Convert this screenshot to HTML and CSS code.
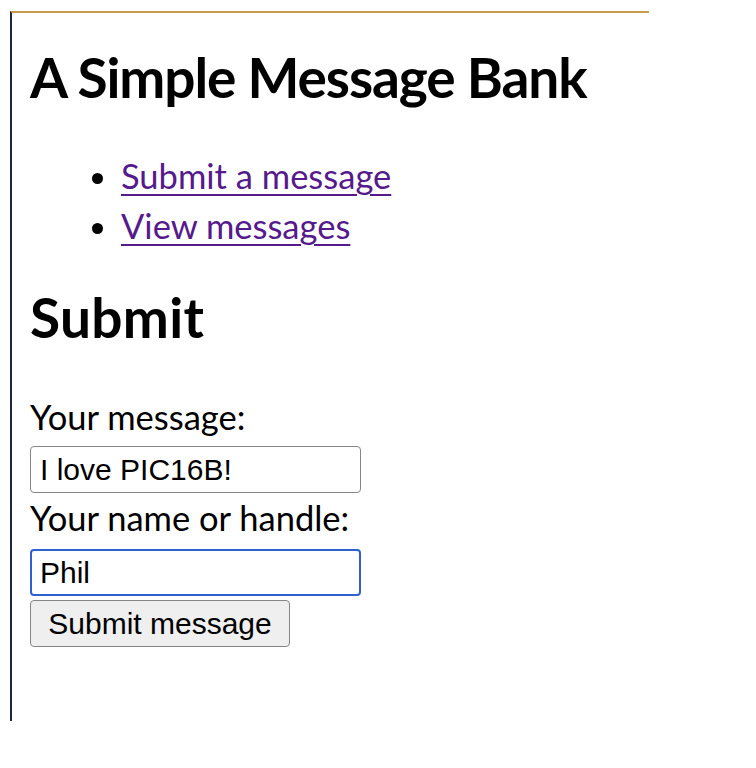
FILE: index.html
```html
<!DOCTYPE html>
<html lang="en">
<head>
<meta charset="utf-8">
<title>A Simple Message Bank</title>
<link rel="stylesheet" href="styles.css">
</head>
<body>
<div class="page">
  <h1 class="title">A Simple Message Bank</h1>
  <ul class="nav">
    <li><a href="#submit">Submit a message</a></li>
    <li><a href="#view">View messages</a></li>
  </ul>
  <h2 class="section">Submit</h2>
  <form class="form">
    <label class="label" for="message">Your message:</label>
    <input class="field" id="message" type="text" value="I love PIC16B!">
    <label class="label" for="handle">Your name or handle:</label>
    <input class="field field-focus" id="handle" type="text" value="Phil">
    <button class="btn" type="button">Submit message</button>
  </form>
</div>
</body>
</html>
```

FILE: styles.css
```css
html, body {
  margin: 0;
  padding: 0;
  background: #ffffff;
}

body {
  font-family: "Lato", "Open Sans", sans-serif;
  color: #000000;
}

.page {
  box-sizing: border-box;
  margin: 11px 0 0 10px;
  width: 639px;
  height: 710px;
  border-top: 2px solid #c79a4e;
  border-left: 2px solid #1e2640;
  padding: 0 0 0 18px;
}

.title,
.section {
  font-size: 55px;
  font-weight: 700;
  line-height: 66px;
  margin: 0;
}

.title {
  padding-top: 31px;
  letter-spacing: -1.1px;
}

.nav {
  margin: 41px 0 0 0;
  padding: 0 0 0 91px;
  font-size: 34.5px;
  line-height: 50px;
}

.nav a {
  color: #551a8b;
  text-decoration: underline;
  text-decoration-thickness: 2px;
  text-underline-offset: 5px;
}

.section {
  margin-top: 33px;
  letter-spacing: 0.3px;
}

.form {
  display: flex;
  flex-direction: column;
  align-items: flex-start;
  margin-top: 42px;
}

.label {
  font-size: 34.5px;
  line-height: 50px;
}

.field {
  box-sizing: border-box;
  width: 331px;
  height: 47px;
  margin: 4px 0 0 0;
  padding: 0 9px;
  border: 1px solid #858585;
  border-radius: 4px;
  font-family: "Liberation Sans", Arial, sans-serif;
  font-size: 30px;
  color: #000000;
  background: #ffffff;
  outline: none;
}

.field-focus {
  margin-top: 6px;
  border: 2px solid #2f60cf;
  padding: 0 8px;
}

.btn {
  box-sizing: border-box;
  width: 260px;
  height: 47px;
  margin-top: 4px;
  padding: 0;
  border: 1px solid #858585;
  border-radius: 4px;
  background: #efefef;
  font-family: "Liberation Sans", Arial, sans-serif;
  font-size: 30px;
  color: #000000;
}
```
